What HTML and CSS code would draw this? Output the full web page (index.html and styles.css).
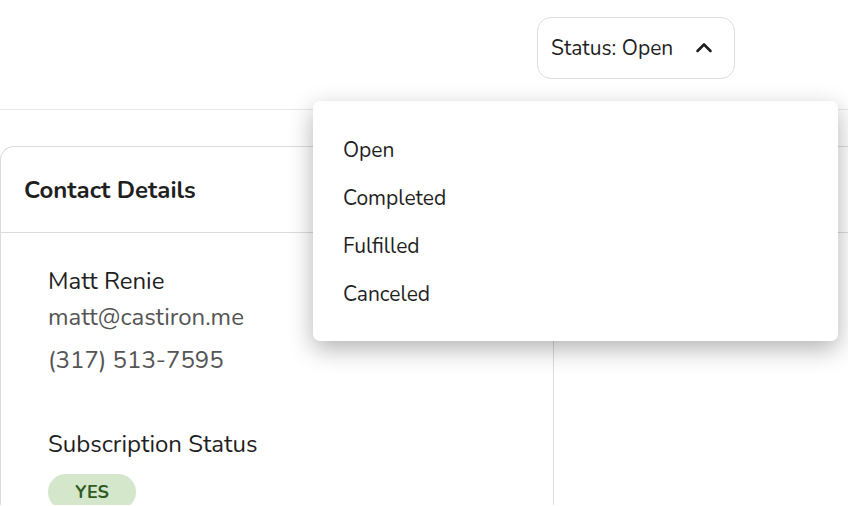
FILE: index.html
```html
<!DOCTYPE html>
<html lang="en">
<head>
	<meta charset="utf-8">
	<title>Order - Contact Details</title>
	<link rel="stylesheet" href="styles.css">
</head>
<body>
	<div class="topbar">
		<div class="status-wrap">
			<button class="status-btn">
				<span>Status: Open</span>
				<svg class="chevron" width="20" height="20" viewBox="0 0 20 20">
					<path d="M3.5 13 L10 6.5 L16.5 13" fill="none" stroke="#1f1f1f" stroke-width="2.6" stroke-linecap="round" stroke-linejoin="round"/>
				</svg>
			</button>
			<ul class="status-menu">
				<li>Open</li>
				<li>Completed</li>
				<li>Fulfilled</li>
				<li>Canceled</li>
			</ul>
		</div>
	</div>

	<div class="content">
		<div class="card">
			<div class="card-head">Contact Details</div>
			<div class="card-body">
				<div class="col col-left">
					<div class="name">Matt Renie</div>
					<div class="muted">matt@castiron.me</div>
					<div class="muted phone">(317) 513-7595</div>
					<div class="label">Subscription Status</div>
					<span class="pill">YES</span>
				</div>
				<div class="col col-right"></div>
			</div>
		</div>
	</div>
</body>
</html>
```

FILE: styles.css
```css
body {
	margin: 0;
	font-family: "Nunito", "Lato", "Noto Sans", sans-serif;
	color: #1f1f1f;
	background-color: #fff;
	overflow: hidden;
}
.topbar {
	height: 110px;
	border-bottom: 1px solid #e7e7e7;
	display: flex;
	justify-content: flex-end;
	padding-right: 113px;
	padding-top: 17px;
	box-sizing: border-box;
}
.status-wrap {
	position: relative;
}
.status-btn {
	width: 198px;
	height: 62px;
	display: flex;
	align-items: center;
	justify-content: space-between;
	padding: 0 20px 0 13px;
	border: 1px solid #dcdcdc;
	border-radius: 14px;
	background: #fff;
	font-family: inherit;
	font-size: 21px;
	color: #1f1f1f;
}
.status-menu {
	position: absolute;
	top: 84px;
	right: -103px;
	width: 525px;
	margin: 0;
	padding: 25px 0 23px;
	list-style: none;
	background: #fff;
	border-radius: 7px;
	box-shadow: 0 8px 24px rgba(0, 0, 0, 0.3);
	z-index: 2;
}
.status-menu li {
	height: 48px;
	line-height: 48px;
	padding-left: 30px;
	font-size: 21px;
}
.content {
	padding-top: 36px;
}
.card {
	border: 1px solid #dcdcdc;
	border-right: none;
	border-bottom: none;
	border-radius: 14px 0 0 0;
}
.card-head {
	height: 85px;
	display: flex;
	align-items: center;
	padding-left: 23px;
	font-size: 24px;
	font-weight: bold;
	border-bottom: 1px solid #dcdcdc;
}
.card-body {
	display: grid;
	grid-template-columns: 553px 1fr;
}
.col-left {
	padding: 32px 47px 0;
	border-right: 1px solid #dcdcdc;
	height: 240px;
}
.name {
	font-size: 24px;
	line-height: 32px;
}
.muted {
	font-size: 24px;
	line-height: 40px;
	color: #555;
}
.phone {
	line-height: 46px;
}
.label {
	margin-top: 45px;
	font-size: 24px;
	line-height: 32px;
}
.pill {
	display: inline-block;
	margin-top: 14px;
	width: 88px;
	height: 36px;
	line-height: 36px;
	text-align: center;
	border-radius: 18px;
	background-color: #d4e7cb;
	color: #2f5a22;
	font-weight: bold;
	font-size: 18px;
}
```
